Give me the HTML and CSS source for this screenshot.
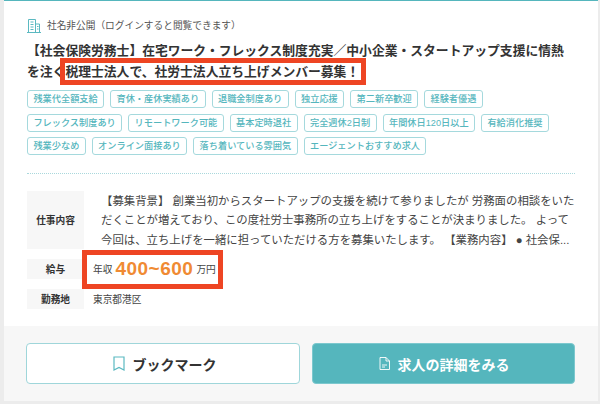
FILE: index.html
```html
<!DOCTYPE html>
<html lang="ja">
<head>
    <meta charset="UTF-8">
    <meta name="viewport" content="width=device-width, initial-scale=1.0">
    <title>求人カード</title>
    <link rel="stylesheet" href="styles.css">
</head>
<body>
    <div class="card">
        <div class="card-body">
            <div class="company">
                <svg class="company-icon" width="14" height="15" viewBox="0 0 14 15" fill="none" stroke="#5bb9c1" stroke-width="1">
                    <path d="M1.500 14V1.500H8.500V14M8.500 6H12.500V14M0 14.500H14"/>
                    <path d="M3.500 4H6.500M3.500 6.500H6.500M3.500 9H6.500M3.500 11.500H6.500M10 8.500H11.500M10 11H11.500"/>
                </svg>
                <span>社名非公開（ログインすると閲覧できます）</span>
            </div>
            <h2 class="job-title">【社会保険労務士】在宅ワーク・フレックス制度充実／中小企業・スタートアップ支援に情熱を注ぐ税理士法人で、社労士法人立ち上げメンバー募集！</h2>
            <ul class="tags">
                <li>残業代全額支給</li>
                <li>育休・産休実績あり</li>
                <li>退職金制度あり</li>
                <li>独立応援</li>
                <li>第二新卒歓迎</li>
                <li>経験者優遇</li>
                <li>フレックス制度あり</li>
                <li>リモートワーク可能</li>
                <li>基本定時退社</li>
                <li>完全週休2日制</li>
                <li>年間休日120日以上</li>
                <li>有給消化推奨</li>
                <li>残業少なめ</li>
                <li>オンライン面接あり</li>
                <li>落ち着いている雰囲気</li>
                <li>エージェントおすすめ求人</li>
            </ul>
            <div class="details">
                <div class="detail-label">仕事内容</div>
                <p class="detail-text">【募集背景】 創業当初からスタートアップの支援を続けて参りましたが 労務面の相談をいただくことが増えており、この度社労士事務所の立ち上げをすることが決まりました。 よって今回は、立ち上げを一緒に担っていただける方を募集いたします。 【業務内容】 ● 社会保...</p>
                <div class="detail-label">給与</div>
                <div class="detail-value">年収 <span class="salary">400~600</span> 万円</div>
                <div class="detail-label">勤務地</div>
                <div class="detail-value">東京都港区</div>
            </div>
        </div>
        <div class="card-footer">
            <button class="btn btn-outline">
                <svg width="12" height="15" viewBox="0 0 12 15" fill="none" stroke="#5bb9c1" stroke-width="1.2">
                    <path d="M1 1H11V14L6 11.500L1 14Z"/>
                </svg>
                ブックマーク
            </button>
            <button class="btn btn-primary">
                <svg width="11" height="13" viewBox="0 0 11 13" fill="none" stroke="#fff" stroke-width="0.9">
                    <path d="M1 .5H7L10.500 4V12.500H1ZM7 .5V4H10.500M3 8H8M3 10H6"/>
                </svg>
                求人の詳細をみる
            </button>
        </div>
        <!-- annotations drawn on top of the screenshot -->
        <div class="mark mark-title"></div>
        <div class="mark mark-salary"></div>
    </div>
</body>
</html>
```
FILE: styles.css
```css
html, body {
    height: 100%;
}
body {
    margin: 0;
    padding: 0 2px 3px 4px;
    box-sizing: border-box;
    background-color: #ececec;
    color: #333;
    font-family: "Liberation Sans", "Noto Sans CJK JP", sans-serif;
}
.card {
    position: relative;
    height: 401px;
    box-sizing: border-box;
    display: flex;
    flex-direction: column;
    background-color: #fff;
    border-top: 1px solid #55b6bd;
}
.card-body {
    flex: 1;
    padding: 16px 23px 0;
}
.company {
    display: flex;
    align-items: center;
    gap: 6px;
    height: 16px;
    font-size: 9.7px;
    color: #555;
}
.job-title {
    margin: 7px 0 0;
    font-size: 12.8px;
    line-height: 21px;
    font-weight: bold;
    color: #333;
}
.tags {
    list-style: none;
    display: flex;
    flex-wrap: wrap;
    gap: 5.700px 6px;
    margin: 8px 0 0;
    padding: 0 0 17.500px;
    border-bottom: 1px dotted #a9d8dc;
}
.tags li {
    height: 18px;
    line-height: 16px;
    box-sizing: border-box;
    padding: 0 5.400px;
    border: 1px solid #a5d9dd;
    border-radius: 3px;
    font-size: 9.2px;
    font-weight: 500;
    color: #55b6bd;
}
.details {
    display: grid;
    grid-template-columns: 57px 1fr;
    row-gap: 10px;
    margin-top: 17px;
}
.detail-label {
    display: flex;
    align-items: center;
    justify-content: center;
    min-height: 20px;
    background-color: #f7f7f7;
    font-size: 9.7px;
    font-weight: bold;
    color: #333;
}
.detail-text {
    height: 58px;
    box-sizing: border-box;
    margin: 0;
    padding: 1px 0 0 17px;
    font-size: 11.400px;
    line-height: 19.500px;
    color: #444;
}
.detail-value {
    display: flex;
    align-items: center;
    gap: 3px;
    padding-left: 9px;
    font-size: 9.7px;
    color: #444;
}
.salary {
    font-size: 19px;
    line-height: 1;
    letter-spacing: 0.5px;
    font-weight: bold;
    color: #f08a33;
}
.card-footer {
    display: flex;
    gap: 12px;
    height: 75px;
    box-sizing: border-box;
    padding: 17px 23px 17px 22px;
    background-color: #f7f7f7;
}
.btn {
    display: flex;
    align-items: center;
    justify-content: center;
    gap: 8px;
    padding: 0;
    border-radius: 4px;
    font-family: inherit;
    font-size: 14px;
    font-weight: bold;
}
.btn-outline {
    width: 274px;
    padding-left: 3px;
    background-color: #fff;
    border: 1px solid #9fd6da;
    color: #333;
}
.btn-primary {
    flex: 1;
    padding-left: 1px;
    background-color: #55b6bd;
    border: 1px solid #7cc8ce;
    color: #fff;
}
.mark {
    position: absolute;
    box-sizing: border-box;
    border: 5px solid #ee4523;
}
.mark-title {
    left: 56px;
    top: 57px;
    width: 306px;
    height: 27px;
}
.mark-salary {
    left: 78px;
    top: 249px;
    width: 141px;
    height: 39px;
}
```
